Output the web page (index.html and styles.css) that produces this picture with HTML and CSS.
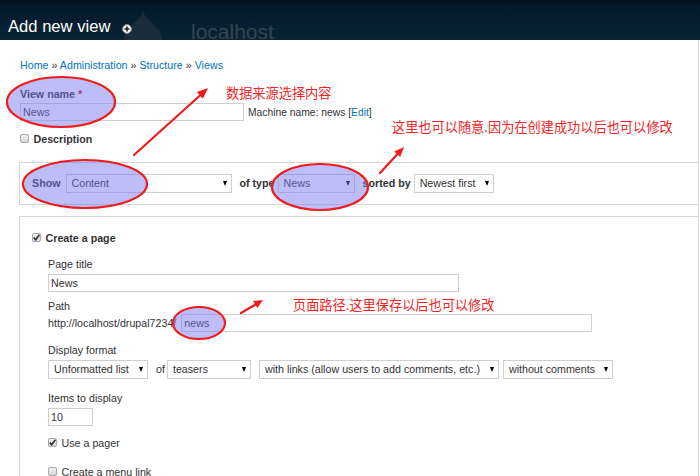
FILE: index.html
```html
<!DOCTYPE html>
<html lang="en">
<head>
<meta charset="utf-8">
<title>Add new view</title>
<link rel="stylesheet" href="styles.css">
</head>
<body>
<div class="screen">
  <header class="topbar">
    <div class="backdrop">
      <svg class="drop" width="38" height="44" viewBox="0 0 38 44"><path d="M19 0C21 7 27 11 31 15C35 19 38 24 38 30C38 38 30 44 19 44C8 44 0 38 0 30C0 24 3 19 7 15C11 11 17 7 19 0Z" fill="#1a2b39"/></svg>
      <span class="site-name">localhost</span>
    </div>
    <h1 class="title">Add new view
      <svg class="add-icon" width="10" height="10" viewBox="0 0 10 10"><circle cx="5" cy="5" r="4.4" fill="#f4f4f4" stroke="#8a8a8a" stroke-width="1"/><path d="M5 2.6V7.4M2.6 5H7.4" stroke="#1a1a1a" stroke-width="1.5"/></svg>
    </h1>
  </header>

  <main class="content">
    <div class="breadcrumb"><a href="#">Home</a> » <a href="#">Administration</a> » <a href="#">Structure</a> » <a href="#">Views</a></div>

    <div class="lbl bold name-lbl">View name <span class="req">*</span></div>
    <div class="row name-row">
      <input class="text w-name" type="text" value="News">
      <span class="machine">Machine name: news [<a href="#">Edit</a>]</span>
    </div>

    <div class="check-row desc-row"><span class="cb"></span><span class="bold">Description</span></div>

    <div class="box show-box">
      <div class="row">
        <span class="bold">Show</span>
        <div class="select s-content"><span>Content</span><i class="arrow"></i></div>
        <span class="bold of-type">of type</span>
        <div class="select s-type"><span>News</span><i class="arrow"></i></div>
        <span class="bold sorted">sorted by</span>
        <div class="select s-sort"><span>Newest first</span><i class="arrow"></i></div>
      </div>
    </div>

    <div class="box page-box">
      <div class="check-row"><span class="cb checked"><svg width="9" height="9" viewBox="0 0 9 9"><path d="M1.8 4.6L3.7 6.6L7.4 1.8" fill="none" stroke="#3a3a3a" stroke-width="1.7"/></svg></span><span class="bold">Create a page</span></div>
      <div class="page-options">
        <div class="lbl title-lbl">Page title</div>
        <input class="text w-wide" type="text" value="News">

        <div class="lbl path-lbl">Path</div>
        <div class="row path-row">
          <span class="prefix">http://localhost/drupal7234/</span>
          <input class="text w-wide" type="text" value="news">
        </div>

        <div class="lbl format-lbl">Display format</div>
        <div class="row format-row">
          <div class="select s-format"><span>Unformatted list</span><i class="arrow"></i></div>
          <span class="of">of</span>
          <div class="select s-teasers"><span>teasers</span><i class="arrow"></i></div>
          <div class="select s-links"><span>with links (allow users to add comments, etc.)</span><i class="arrow"></i></div>
          <div class="select s-comments"><span>without comments</span><i class="arrow"></i></div>
        </div>

        <div class="lbl items-lbl">Items to display</div>
        <input class="text w-items" type="text" value="10">

        <div class="check-row pager-row"><span class="cb checked"><svg width="9" height="9" viewBox="0 0 9 9"><path d="M1.8 4.6L3.7 6.6L7.4 1.8" fill="none" stroke="#3a3a3a" stroke-width="1.7"/></svg></span><span>Use a pager</span></div>
        <div class="check-row menu-row"><span class="cb"></span><span>Create a menu link</span></div>
      </div>
    </div>
  </main>

  <svg class="annot" width="700" height="476" viewBox="0 0 700 476">
    <g fill="rgba(118,118,240,0.48)" stroke="#ee1c1c" stroke-width="2.2">
      <ellipse cx="61" cy="102" rx="54" ry="25"/>
      <ellipse cx="85" cy="184" rx="62" ry="24"/>
      <ellipse cx="320" cy="187" rx="48" ry="23"/>
      <ellipse cx="199" cy="323" rx="26" ry="16"/>
    </g>
    <g stroke="#ee1c1c" stroke-width="2.2" stroke-linecap="round" fill="none">
      <line x1="134" y1="155" x2="200" y2="95.5"/>
      <line x1="380" y1="173" x2="397.5" y2="154"/>
      <line x1="241" y1="313" x2="255.5" y2="304.5"/>
    </g>
    <g fill="#ee1c1c">
      <polygon points="208,88 202.8,98.7 196.8,91.9"/>
      <polygon points="404,147 400.1,157.1 394.3,151.6"/>
      <polygon points="263,300 257.3,308 253.2,301.1"/>
    </g>
  </svg>
  <div class="note n1">数据来源选择内容</div>
  <div class="note n2">这里也可以随意.因为在创建成功以后也可以修改</div>
  <div class="note n3">页面路径.这里保存以后也可以修改</div>
</div>
</body>
</html>
```

FILE: styles.css
```css
html, body {
  margin: 0;
  padding: 0;
  overflow: hidden;
  background: #fff;
}

body {
  font-family: "Liberation Sans", Arial, sans-serif;
  font-size: 10.7px;
  line-height: 15px;
  color: #333;
}

a {
  color: #0074bd;
  text-decoration: none;
}

.screen {
  position: relative;
  width: 700px;
  height: 476px;
  overflow: hidden;
}

/* ---------- top bar ---------- */
.topbar {
  position: relative;
  height: 40px;
  overflow: hidden;
  background: linear-gradient(#01101b 0, #031a2a 8px, #0a2335 100%);
}

.backdrop {
  position: absolute;
  inset: 0;
}

.drop {
  position: absolute;
  left: 124px;
  top: 11px;
}

.site-name {
  position: absolute;
  left: 191px;
  top: 23px;
  font-size: 21px;
  line-height: 17px;
  color: #37444f;
}

.title {
  position: relative;
  margin: 0;
  padding: 17px 0 0 8px;
  display: flex;
  align-items: center;
  font-size: 16.6px;
  line-height: 20px;
  font-weight: normal;
  color: #fff;
}

.add-icon {
  margin: 3px 0 0 12px;
}

/* ---------- content ---------- */
.content {
  box-sizing: border-box;
  height: 436px;
  margin-right: 1px;
  border-right: 1px solid #dcdcdc;
  padding: 18px 0 0 20px;
}

.breadcrumb {
  height: 15px;
}

.bold {
  font-weight: bold;
}

.lbl {
  display: block;
  height: 15px;
}

.req {
  color: #c00;
}

.row {
  display: flex;
  align-items: center;
}

.name-lbl {
  margin-top: 14px;
}

.name-row {
  margin-top: 1px;
}

input.text {
  box-sizing: border-box;
  display: block;
  height: 18px;
  margin: 0;
  padding: 0 2px;
  border: 1px solid #cfcfcf;
  background: #fff;
  font-family: "Liberation Sans", Arial, sans-serif;
  font-size: 10.7px;
  color: #333;
  outline: none;
}

.w-name {
  width: 224px;
}

.w-wide {
  width: 411px;
}

.w-items {
  width: 45px;
  height: 17px;
}

.machine {
  margin-left: 4px;
  font-size: 10.3px;
}

.check-row {
  display: flex;
  align-items: center;
  height: 15px;
}

.cb {
  box-sizing: border-box;
  width: 9px;
  height: 9px;
  margin: 0 4.5px 2px 0;
  border: 1px solid #a8a8a8;
  border-radius: 2px;
  background: linear-gradient(#f2f2f2, #d6d6d6);
  display: flex;
  align-items: center;
  justify-content: center;
  overflow: visible;
}

.cb svg {
  flex: none;
}

.desc-row {
  margin-top: 10.5px;
}

/* ---------- boxes ---------- */
.box {
  margin-left: -1px;
  border: 1px solid #d6d6d6;
  border-right: 0;
}

.show-box {
  margin-top: 15.5px;
  padding: 11px 0 11px 12px;
}

.select {
  box-sizing: border-box;
  height: 19px;
  display: flex;
  align-items: center;
  justify-content: space-between;
  padding: 0 4px 0 5px;
  border: 1px solid #cfcfcf;
  background: #fff;
  white-space: nowrap;
}

.arrow {
  width: 0;
  height: 0;
  border-left: 2.5px solid transparent;
  border-right: 2.5px solid transparent;
  border-top: 5px solid #000;
}

.show-box .bold {
  margin-right: 5px;
}

.s-content { width: 166px; }
.of-type { margin-left: 8px; }
.show-box .of-type { margin-right: 3px; }
.s-type { width: 77px; }
.sorted { margin-left: 8px; }
.show-box .sorted { margin-right: 3px; }
.s-sort { width: 80px; }

.page-box {
  margin-top: 11px;
  padding: 13.5px 0 40px 12px;
}

.page-options {
  padding-left: 16px;
}

.title-lbl { margin-top: 11px; }
.title-lbl + input { margin-top: 2px; }

.path-lbl { margin-top: 7.5px; }
.prefix { margin-right: 5px; }

.format-lbl { margin-top: 11px; }
.format-row { margin-top: 2px; }
.s-format { width: 100px; }
.of { margin: 0 2px 0 8px; }
.s-teasers { width: 84px; }
.s-links { width: 240px; margin-left: 8px; }
.s-comments { width: 110px; margin-left: 4px; }

.items-lbl { margin-top: 12px; }
.items-lbl + input { margin-top: 1.5px; }

.pager-row { margin-top: 10.5px; }
.menu-row { margin-top: 13.5px; }

/* ---------- annotations ---------- */
.annot {
  position: absolute;
  left: 0;
  top: 0;
  pointer-events: none;
}

.note {
  position: absolute;
  font-family: "Noto Sans CJK SC", sans-serif;
  font-size: 13.2px;
  line-height: 13px;
  color: #f22424;
  white-space: nowrap;
}

.n1 { left: 226px; top: 85.5px; }
.n2 { left: 392px; top: 119.5px; }
.n3 { left: 293px; top: 297.5px; }
```
